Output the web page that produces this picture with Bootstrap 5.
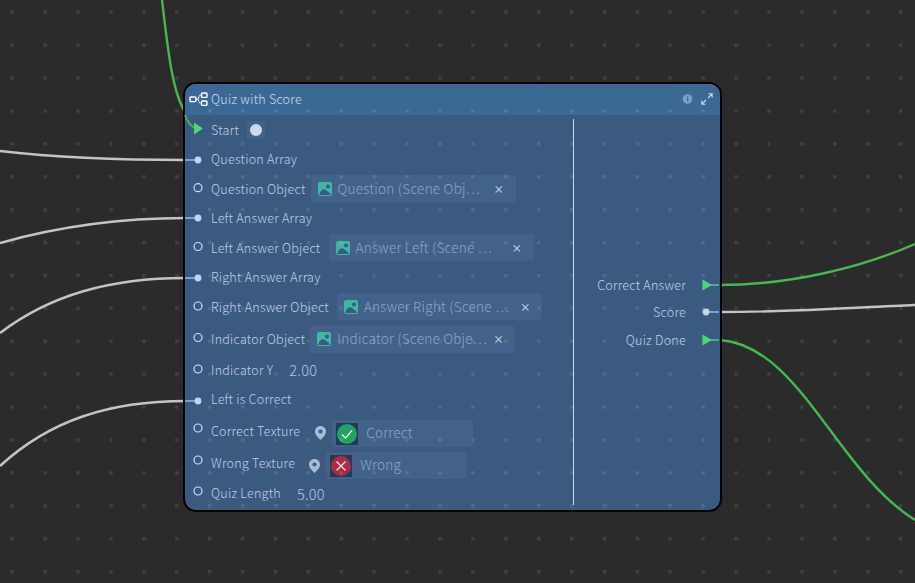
<!DOCTYPE html>
<html lang="en">
  <head>
    <meta charset="UTF-8" />
    <title>Quiz with Score</title>
    <link href="https://cdn.jsdelivr.net/npm/bootstrap@5.3.3/dist/css/bootstrap.min.css" rel="stylesheet" crossorigin="anonymous" />
    <style>
      html, body { height: 100%; margin: 0; overflow: hidden; background: #2b2b2b; }
      body { font-family: "Noto Sans CJK SC", "Noto Sans", sans-serif; font-weight: 300; font-size: 12.5px; color: #c0d0e6; letter-spacing: .25px; }
      .graph-layer { position: absolute; left: 0; top: 0; width: 915px; height: 583px; pointer-events: none; }
      .graph-top { z-index: 3; }
      .quiz-node {
        position: absolute; left: 183px; top: 82px; width: 539px; height: 430px; z-index: 2;
        background: #3b5a80; border: 2px solid #000; border-radius: 13px; overflow: hidden;
      }
      .node-head { height: 31px; background: #3c6896; padding: 0 7px 0 26px; color: #d0ddee; }
      .node-body { height: 395px; }
      .in-col { width: 388px; padding-left: 26px; }
      .divider { position: absolute; left: 387.5px; top: 35px; width: 1.5px; height: 386px; background: #c9d9ee; }
      .out-col { padding-right: 34px; margin-left: auto; }
      .out-row { height: 27.5px; }
      .rh-29 { height: 29.5px; }
      .rh-35 { height: 35px; }
      .rh-27 { height: 27.5px; }
      .rh-30 { height: 30px; }
      .rh-36 { height: 36px; padding-top: 6px; }
      .rh-32 { height: 32px; padding-top: 2px; }
      .rh-23 { height: 23px; }
      .port-label { padding-top: 1.5px; }
      .obj-chip { width: 205px; height: 27px; background: #43628a; border-radius: 3px; padding: 0 0 0 7px; color: #8ea6c6; gap: 6px; font-size: 13.5px; margin-left: 4px; }
      .chip-near { margin-left: 1px; }
      .obj-name { width: 150px; white-space: nowrap; overflow: hidden; padding-bottom: 2px; }
      .obj-x { color: #e3ebf5; font-size: 10.5px; line-height: 1; font-weight: 400; }
      .tex-chip { width: 141px; height: 27px; background: #43628a; border-radius: 3px; color: #8ea6c6; padding-left: 4px; gap: 8px; font-size: 13.5px; margin-left: 6px; }
      .tex-chip span { padding-bottom: 3px; }
      .num-val { color: #b5c7e0; font-size: 14.5px; margin-left: 8px; }
      .start-bubble { width: 18px; height: 18px; background: #43628a; border-radius: 3px; }
      .start-dot { width: 12px; height: 12px; border-radius: 50%; background: #c9d9f1; }
      .tex-icon { width: 22px; height: 22px; }
      .pin-icon { width: 11px; height: 14px; margin-left: 15px; margin-top: 6px; }
      .pin-low { margin-left: 14px; margin-top: 7px; }
      .obj-icon { width: 14px; height: 14px; flex: none; }
    </style>
  </head>
  <body>
    <!-- cables under the node -->
    <svg class="graph-layer" viewBox="0 0 915 583" fill="none">
      <g stroke="#c4c4c0" stroke-width="2.4">
        <path d="M0,151 C60,158 120,160 186,160" />
        <path d="M0,243 C60,226 120,218 186,218" />
        <path d="M0,333 C50,295 110,278 186,278" />
        <path d="M0,466 C50,420 110,401 186,401" />
        <path d="M719,312 C800,312 860,307 915,305" />
      </g>
      <g stroke="#45b850" stroke-width="2.4">
        <path d="M162,0 C168,50 172,92 186,114" />
        <path d="M719,285 C790,285 860,268 915,244" />
        <path d="M719,340 C800,345 835,470 915,520" />
      </g>
    </svg>

    <div class="quiz-node">
      <div class="node-head d-flex align-items-center">
        <span>Quiz with Score</span>
      </div>
      <div class="node-body d-flex">
        <div class="in-col d-flex flex-column">
          <div class="rh-29 d-flex align-items-center gap-2">
            <span class="port-label">Start</span>
            <span class="start-bubble d-flex align-items-center justify-content-center"><span class="start-dot"></span></span>
          </div>
          <div class="rh-29 d-flex align-items-center">Question Array</div>
          <div class="rh-29 d-flex align-items-center gap-1">
            <span class="port-label">Question Object</span>
            <div class="obj-chip chip-near d-flex align-items-center">
              <svg class="obj-icon" viewBox="0 0 14 14"><rect width="14" height="14" rx="2" fill="#3fb6a6"/><circle cx="10" cy="4.6" r="2" fill="#3b5a80"/><path d="M1,13 C3,7 6,6.5 8,8 C10,9.5 12,11 13,13Z" fill="#3b5a80"/></svg>
              <span class="obj-name">Question (Scene Obj…</span>
              <span class="obj-x">×</span>
            </div>
          </div>
          <div class="rh-29 d-flex align-items-center">Left Answer Array</div>
          <div class="rh-29 d-flex align-items-center gap-1">
            <span class="port-label">Left Answer Object</span>
            <div class="obj-chip d-flex align-items-center">
              <svg class="obj-icon" viewBox="0 0 14 14"><rect width="14" height="14" rx="2" fill="#3fb6a6"/><circle cx="10" cy="4.6" r="2" fill="#3b5a80"/><path d="M1,13 C3,7 6,6.5 8,8 C10,9.5 12,11 13,13Z" fill="#3b5a80"/></svg>
              <span class="obj-name">Answer Left (Scene …</span>
              <span class="obj-x">×</span>
            </div>
          </div>
          <div class="rh-29 d-flex align-items-center">Right Answer Array</div>
          <div class="rh-29 d-flex align-items-center gap-1">
            <span class="port-label">Right Answer Object</span>
            <div class="obj-chip d-flex align-items-center">
              <svg class="obj-icon" viewBox="0 0 14 14"><rect width="14" height="14" rx="2" fill="#3fb6a6"/><circle cx="10" cy="4.6" r="2" fill="#3b5a80"/><path d="M1,13 C3,7 6,6.5 8,8 C10,9.5 12,11 13,13Z" fill="#3b5a80"/></svg>
              <span class="obj-name">Answer Right (Scene …</span>
              <span class="obj-x">×</span>
            </div>
          </div>
          <div class="rh-35 d-flex align-items-center gap-1">
            <span>Indicator Object</span>
            <div class="obj-chip chip-near d-flex align-items-center">
              <svg class="obj-icon" viewBox="0 0 14 14"><rect width="14" height="14" rx="2" fill="#3fb6a6"/><circle cx="10" cy="4.6" r="2" fill="#3b5a80"/><path d="M1,13 C3,7 6,6.5 8,8 C10,9.5 12,11 13,13Z" fill="#3b5a80"/></svg>
              <span class="obj-name">Indicator (Scene Obje…</span>
              <span class="obj-x">×</span>
            </div>
          </div>
          <div class="rh-27 d-flex align-items-center gap-2">
            <span>Indicator Y</span><span class="num-val">2.00</span>
          </div>
          <div class="rh-30 d-flex align-items-center">Left is Correct</div>
          <div class="rh-36 d-flex align-items-start">
            <span class="port-label">Correct Texture</span>
            <svg class="pin-icon" viewBox="0 0 11 14"><path fill-rule="evenodd" d="M5.5,0 C8.6,0 11,2.4 11,5.4 C11,9 7.5,11.5 5.5,14 C3.5,11.5 0,9 0,5.4 C0,2.4 2.4,0 5.5,0Z M5.5,3.4 a2.1,2.1 0 1,0 0.01,0Z" fill="#a9bcd4"/></svg>
            <div class="tex-chip d-flex align-items-center">
              <svg class="tex-icon" viewBox="0 0 22 22"><rect width="22" height="22" fill="#243a57"/><circle cx="11" cy="11" r="10" fill="#1fa463"/><path d="M6,11.5 L9.5,15 L16,7.5" stroke="#e8f3ec" stroke-width="1.3" fill="none"/></svg>
              <span>Correct</span>
            </div>
          </div>
          <div class="rh-32 d-flex align-items-start">
            <span class="port-label">Wrong Texture</span>
            <svg class="pin-icon pin-low" viewBox="0 0 11 14"><path fill-rule="evenodd" d="M5.5,0 C8.6,0 11,2.4 11,5.4 C11,9 7.5,11.5 5.5,14 C3.5,11.5 0,9 0,5.4 C0,2.4 2.4,0 5.5,0Z M5.5,3.4 a2.1,2.1 0 1,0 0.01,0Z" fill="#a9bcd4"/></svg>
            <div class="tex-chip d-flex align-items-center">
              <svg class="tex-icon" viewBox="0 0 22 22"><rect width="22" height="22" fill="#243a57"/><circle cx="11" cy="11" r="10" fill="#ac2a42"/><path d="M6.5,6.5 L15.5,15.5 M15.5,6.5 L6.5,15.5" stroke="#f1e6e8" stroke-width="1.3"/></svg>
              <span>Wrong</span>
            </div>
          </div>
          <div class="rh-23 d-flex align-items-center gap-2">
            <span>Quiz Length</span><span class="num-val">5.00</span>
          </div>
        </div>
        <div class="divider"></div>
        <div class="out-col d-flex flex-column justify-content-center text-end">
          <div class="out-row d-flex align-items-center justify-content-end">Correct Answer</div>
          <div class="out-row d-flex align-items-center justify-content-end">Score</div>
          <div class="out-row d-flex align-items-center justify-content-end">Quiz Done</div>
        </div>
      </div>
    </div>

    <!-- ports, header icons and the canvas dots that show through the node -->
    <svg class="graph-layer graph-top" viewBox="0 0 915 583" fill="none">
      <defs>
        <pattern id="dotGrid" x="10.6" y="10.6" width="32.9" height="32.9" patternUnits="userSpaceOnUse">
          <rect width="3.4" height="3.4" fill="#fff" fill-opacity=".1" />
        </pattern>
      </defs>
      <rect width="915" height="583" fill="url(#dotGrid)" />

      <!-- header icons -->
      <g stroke="#fff" stroke-width="1.4">
        <rect x="190" y="97" width="6" height="4.6" rx="1" />
        <rect x="201.5" y="93" width="5.5" height="4.4" rx="1" />
        <rect x="201.5" y="101" width="5.5" height="4.4" rx="1" />
        <path d="M196,99.3 L198,99.3 M200.8,95 C198.5,95 199,98 198,99.3 C199,100.5 198.5,103.3 200.8,103.3" stroke-width="1" />
      </g>
      <circle cx="687.5" cy="99" r="4.8" fill="#7f9dc2" />
      <rect x="687" y="97.8" width="1.2" height="3.4" fill="#3c6896" />
      <rect x="687" y="96" width="1.2" height="1" fill="#3c6896" />
      <path d="M708,98 L712,94 M708.5,93.8 H712.2 V97.5 M706,100 L702,104 M701.8,100.5 V104.2 H705.5" stroke="#cfd8e4" stroke-width="1.1" />

      <!-- input ports -->
      <path d="M185,115 C187,121 190,126 196,128.5" stroke="#4fae6b" stroke-width="2" />
      <path d="M194,122.5 L203,128.5 L194,134.5Z" fill="#4ed777" />
      <g stroke="#7ea2d4" stroke-width="2">
        <path d="M185,160 H198" />
        <path d="M185,218 H198" />
        <path d="M185,278 H198" />
        <path d="M185,401 H198" />
        <path d="M706,312 H719" />
      </g>
      <g fill="#c5d5ea">
        <circle cx="198" cy="160" r="3.4" />
        <circle cx="198" cy="218" r="3.4" />
        <circle cx="198" cy="278" r="3.4" />
        <circle cx="198" cy="401" r="3.4" />
        <circle cx="706" cy="312" r="3.4" />
      </g>
      <g stroke="#d3e0f0" stroke-width="1.2">
        <circle cx="198" cy="187.7" r="4" />
        <circle cx="198" cy="246.5" r="4" />
        <circle cx="198" cy="306" r="4" />
        <circle cx="198" cy="337.5" r="4" />
        <circle cx="198" cy="369" r="4" />
        <circle cx="198" cy="428" r="4" />
        <circle cx="198" cy="460" r="4" />
        <circle cx="198" cy="491" r="4" />
      </g>

      <!-- output ports -->
      <path d="M708,285 H719" stroke="#4fa89a" stroke-width="2" />
      <path d="M708,340 H719" stroke="#4fa89a" stroke-width="2" />
      <path d="M702.5,279.5 L712,285 L702.5,290.5Z" fill="#4ed777" />
      <path d="M702.5,334.5 L712,340 L702.5,345.5Z" fill="#4ed777" />
    </svg>

    <script src="https://cdn.jsdelivr.net/npm/bootstrap@5.3.3/dist/js/bootstrap.bundle.min.js"></script>
  </body>
</html>
